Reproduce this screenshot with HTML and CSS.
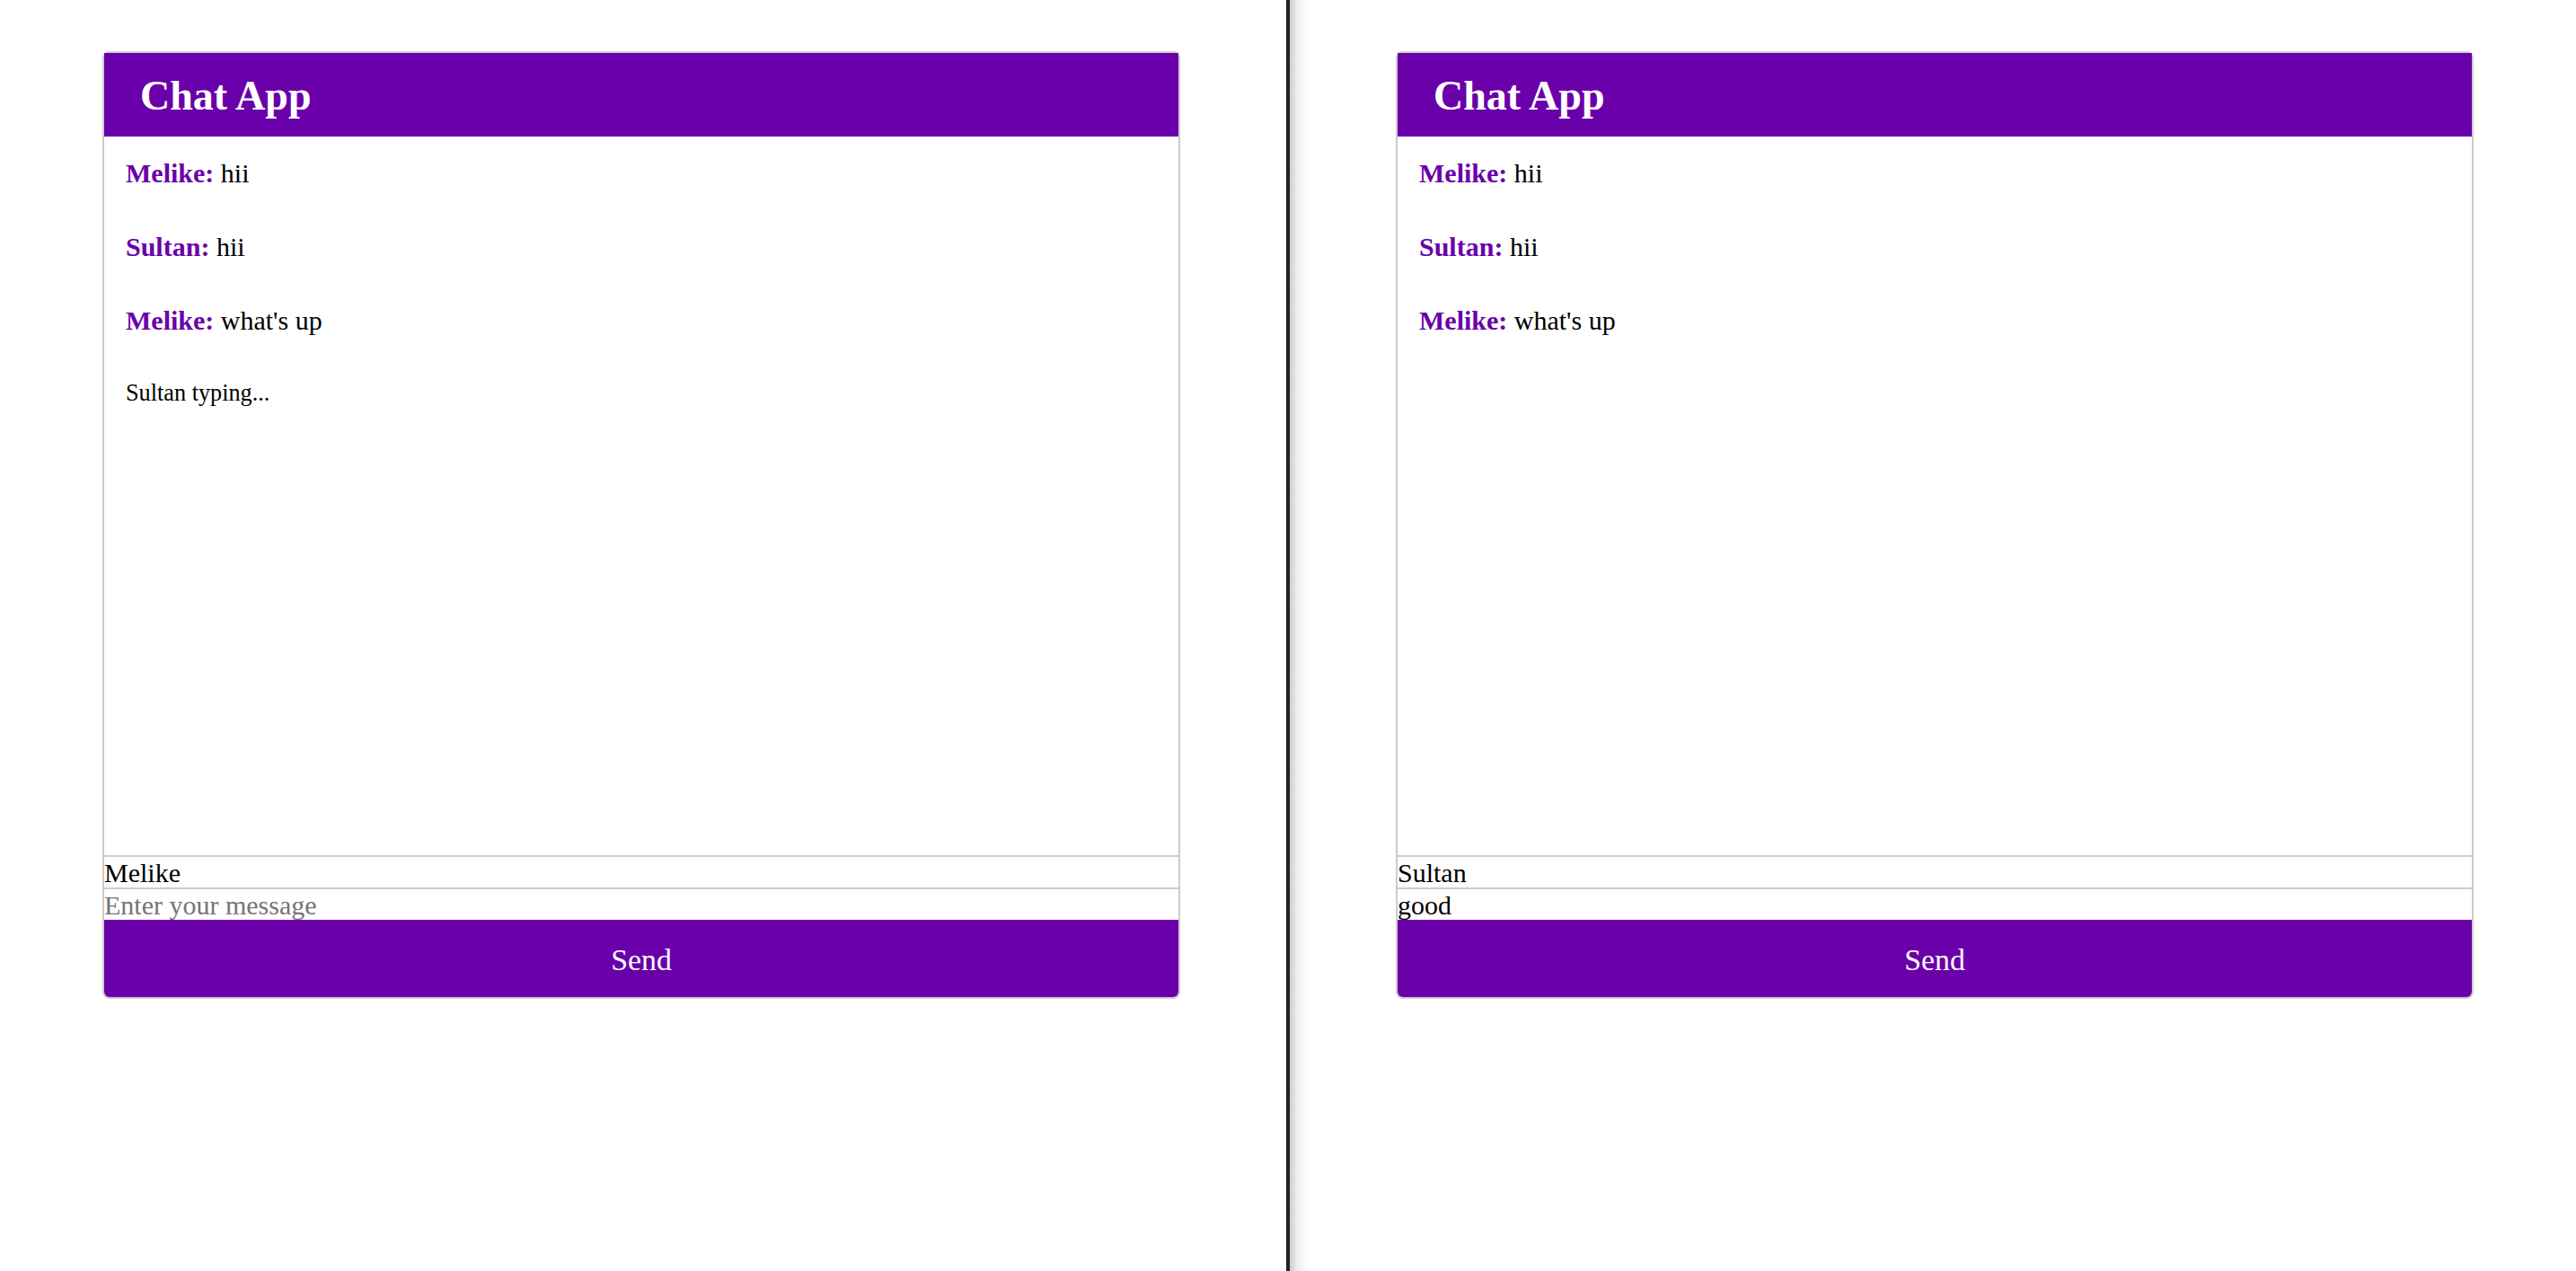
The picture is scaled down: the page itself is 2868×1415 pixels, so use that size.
FILE: index.html
```html
<!DOCTYPE html>
<html lang="en">
<head>
<meta charset="utf-8">
<title>Chat App</title>
<link rel="stylesheet" href="styles.css">
</head>
<body>
<div class="screen">
  <div class="pane pane-left">
    <div class="card">
      <div class="card-header"><h2 class="title">Chat App</h2></div>
      <div class="messages">
        <div class="msg"><span class="name">Melike:</span> hii</div>
        <div class="msg"><span class="name">Sultan:</span> hii</div>
        <div class="msg"><span class="name">Melike:</span> what's up</div>
        <div class="typing">Sultan typing...</div>
      </div>
      <input class="field field-user" type="text" value="Melike">
      <input class="field field-msg" type="text" placeholder="Enter your message">
      <button class="send">Send</button>
    </div>
  </div>
  <div class="divider"></div>
  <div class="pane pane-right">
    <div class="card">
      <div class="card-header"><h2 class="title">Chat App</h2></div>
      <div class="messages">
        <div class="msg"><span class="name">Melike:</span> hii</div>
        <div class="msg"><span class="name">Sultan:</span> hii</div>
        <div class="msg"><span class="name">Melike:</span> what's up</div>
      </div>
      <input class="field field-user" type="text" value="Sultan">
      <input class="field field-msg" type="text" placeholder="Enter your message" value="good">
      <button class="send">Send</button>
    </div>
  </div>
</div>
</body>
</html>
```

FILE: styles.css
```css
html, body {
  margin: 0;
  padding: 0;
  background: #ffffff;
  font-family: "Liberation Serif", "Times New Roman", serif;
  color: #000;
}

.screen {
  display: flex;
  height: 1415px;
  overflow: hidden;
}

.pane {
  box-sizing: border-box;
  padding-top: 57px;
}

.pane-left {
  width: 1432px;
  padding-left: 114px;
}

.pane-right {
  flex: 1;
  padding-left: 118px;
}

.divider {
  width: 4px;
  background: #1f2226;
  position: relative;
  z-index: 2;
}

.divider::after {
  content: "";
  position: absolute;
  top: 0;
  bottom: 0;
  left: 100%;
  width: 22px;
  background: linear-gradient(to right, rgba(0, 0, 0, 0.2), rgba(0, 0, 0, 0.06) 40%, rgba(0, 0, 0, 0));
}

.card {
  box-sizing: border-box;
  width: 1200px;
  border: 2px solid #cccccc;
  border-radius: 8px;
  display: flex;
  flex-direction: column;
  background: #fff;
}

.card-header {
  background: #6a00aa;
  height: 93px;
  box-sizing: border-box;
  padding: 3px 40px 0;
}

.title {
  margin: 0;
  font-size: 46px;
  line-height: 90px;
  font-weight: bold;
  color: #ffffff;
}

.messages {
  height: 800px;
  box-sizing: border-box;
  padding: 24px 24px 0;
  display: flex;
  flex-direction: column;
  gap: 48px;
}

.msg {
  font-size: 30px;
  line-height: 34px;
}

.name {
  font-weight: bold;
  color: #6a00aa;
}

.typing {
  font-size: 26.25px;
  line-height: 26px;
  margin-top: 3px;
}

.field {
  display: block;
  box-sizing: border-box;
  width: 100%;
  height: 36px;
  margin: 0;
  padding: 2px 0 0;
  border: none;
  border-top: 2px solid #cccccc;
  outline: none;
  background: #fff;
  font-family: "Liberation Serif", "Times New Roman", serif;
  font-size: 30px;
  color: #000;
}

.field::placeholder {
  color: #757575;
}

.send {
  display: block;
  width: 100%;
  height: 86px;
  margin: 0;
  padding: 3px 0 0;
  border: none;
  border-radius: 0 0 6px 6px;
  background: #6a00aa;
  color: #ffffff;
  font-family: "Liberation Serif", "Times New Roman", serif;
  font-size: 33.75px;
  cursor: pointer;
}
```
